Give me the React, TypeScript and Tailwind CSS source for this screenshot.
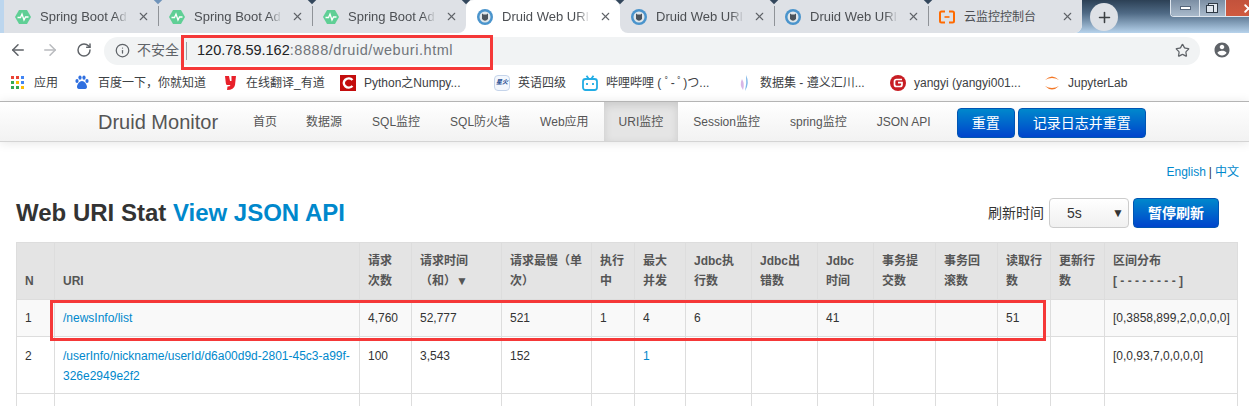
import React from 'react';
import { ArrowLeft, ArrowRight, RotateCw, Info, Star, X, Plus } from 'lucide-react';

const SpringIcon = () => (
  <svg width="16" height="16" viewBox="0 0 16 16" className="shrink-0">
    <polygon points="4,1 12,1 16,8 12,15 4,15 0,8" fill="#5fcf95" />
    <polyline points="2.5,8.5 5.5,8.5 7,5 9,11 10.5,8 13.5,8" fill="none" stroke="#fff" strokeWidth="1.3" />
  </svg>
);

const DruidIcon = () => (
  <svg width="16" height="16" viewBox="0 0 16 16" className="shrink-0">
    <circle cx="8" cy="8" r="8" fill="#4a94cc" />
    <circle cx="8" cy="8" r="5.5" fill="#dfe6ea" />
    <path d="M5 4.5 L6.5 5.5 H9.5 L11 4.5 V10 Q8 13.5 5 10 Z" fill="#4b545c" />
  </svg>
);

const CloudIcon = () => (
  <svg width="16" height="16" viewBox="0 0 16 16" className="shrink-0">
    <path d="M6 2.5 H2.5 Q1 2.5 1 4 V12 Q1 13.5 2.5 13.5 H6 M10 2.5 H13.5 Q15 2.5 15 4 V12 Q15 13.5 13.5 13.5 H10" fill="none" stroke="#ff6a00" strokeWidth="2" />
    <rect x="5.5" y="7.2" width="5" height="1.6" fill="#ff6a00" />
  </svg>
);

const tabs = [
  { title: 'Spring Boot Ad', icon: <SpringIcon /> },
  { title: 'Spring Boot Ad', icon: <SpringIcon /> },
  { title: 'Spring Boot Ad', icon: <SpringIcon />, corner: 'rounded-br-lg' },
  { title: 'Druid Web URI', icon: <DruidIcon />, active: true },
  { title: 'Druid Web URI', icon: <DruidIcon />, corner: 'rounded-bl-lg' },
  { title: 'Druid Web URI', icon: <DruidIcon /> },
  { title: '云监控控制台', icon: <CloudIcon />, corner: 'rounded-br-lg', small: true },
];

const chromeControl = 'flex items-center justify-center border-r border-[#dfe6ee] bg-[linear-gradient(to_bottom,#7b8ea3,#a9bacb)]';

const TabBar = () => (
  <div className="flex h-[33px] bg-[linear-gradient(to_bottom,#2c4055,#4f6a85_40%,#b7d3ec)]">
    <div className="w-[4px] bg-[#bcd6ee]" />
    <div className="flex w-[1078px] rounded-br-lg bg-[linear-gradient(to_bottom,#dee1e6_50%,#ffffff_50%)]">
      {tabs.map((t, i) => (
        <div
          key={i}
          className={
            'relative flex w-[154px] items-center pl-[11px] ' +
            (t.active ? 'rounded-t-lg bg-white ' : 'bg-[#dee1e6] ') +
            (t.corner || '')
          }
        >
          {i > 0 && !t.active && !tabs[i - 1].active && (
            <div className="absolute left-0 top-[6px] h-[20px] w-px bg-[#8f9398]" />
          )}
          {i > 0 && (
            <div
              className={
                'absolute left-[-3px] top-[-3px] z-10 h-[6px] w-[6px] rotate-45 ' +
                (i === 1 ? 'bg-[#6f93ba]' : 'bg-[#33475c]')
              }
            />
          )}
          {t.icon}
          <span
            className={
              'ml-[9px] w-[88px] overflow-hidden whitespace-nowrap text-[#4c4f53] ' +
              (t.small ? 'text-[12px]' : 'text-[13px] [mask-image:linear-gradient(to_right,black_85%,transparent)]')
            }
          >
            {t.title}
          </span>
          <X size={13} strokeWidth={2} className="ml-[9px] text-[#5f6368]" />
        </div>
      ))}
    </div>
    <div className="flex flex-1 items-start justify-between">
      <div className="ml-[8px] mt-[3px] flex h-[28px] w-[28px] items-center justify-center rounded-full bg-[#dee1e6]">
        <Plus size={17} strokeWidth={2.2} className="text-[#3c4043]" />
      </div>
      <div className="flex h-[17px] w-[79px] overflow-hidden rounded-bl border-b border-l border-[#dfe6ee]">
        <div className={chromeControl + ' w-[29px]'}>
          <div className="h-[4px] w-[11px] border border-[#55657a] bg-white" />
        </div>
        <div className={chromeControl + ' w-[26px]'}>
          <div className="relative h-[10px] w-[10px] border border-[#2f3a46] bg-[#dfe6ee]">
            <div className="absolute left-[-3px] top-[1px] h-[8px] w-[8px] border border-[#2f3a46] bg-[#dfe6ee]" />
          </div>
        </div>
        <div className="flex flex-1 items-center justify-end bg-[linear-gradient(to_bottom,#c3523c,#d05a3f)]">
          <X size={13} strokeWidth={3.5} className="mr-[-6px] text-white" />
        </div>
      </div>
    </div>
  </div>
);

const Toolbar = () => (
  <div className="relative flex h-[33px] items-center bg-white">
    <ArrowLeft size={18} strokeWidth={2} className="ml-[9px] text-[#5f6368]" />
    <ArrowRight size={18} strokeWidth={2} className="ml-[14px] text-[#b9bbbe]" />
    <RotateCw size={16} strokeWidth={2.2} className="ml-[17px] text-[#5f6368]" />
    <div className="ml-[12px] mt-[2px] flex h-[28px] w-[1096px] items-center rounded-full bg-[#f1f3f4]">
      <Info size={15} strokeWidth={2} className="ml-[11px] text-[#5f6368]" />
      <span className="ml-[7px] text-[14px] text-[#5f6368]">不安全</span>
      <div className="ml-[7px] h-[18px] w-px bg-[#9aa0a6]" />
      <span className="ml-[10px] text-[14.5px] text-[#202124]">
        120.78.59.162<span className="tracking-[0.55px] text-[#70757a]">:8888/druid/weburi.html</span>
      </span>
      <Star size={15} strokeWidth={2} className="ml-auto mr-[10px] text-[#5f6368]" />
    </div>
    <svg width="18" height="18" viewBox="0 0 24 24" className="ml-[13px]" fill="#5f6368">
      <path d="M12 2C6.48 2 2 6.48 2 12s4.48 10 10 10 10-4.48 10-10S17.52 2 12 2zm0 3c1.66 0 3 1.34 3 3s-1.34 3-3 3-3-1.34-3-3 1.34-3 3-3zm0 14.2c-2.5 0-4.71-1.28-6-3.22.03-1.99 4-3.08 6-3.08 1.99 0 5.97 1.09 6 3.08-1.29 1.94-3.5 3.22-6 3.22z" />
    </svg>
    {/* 截图上的红框标注 */}
    <div className="absolute left-[181px] top-[2px] h-[35px] w-[312px] border-[3px] border-[#f53838]" />
  </div>
);

const AppsIcon = () => {
  const colors = ['#ea4335', '#ea4335', '#4285f4', '#34a853', '#fbbc05', '#4285f4', '#34a853', '#34a853', '#fbbc05'];
  return (
    <div className="grid h-[13px] w-[13px] shrink-0 grid-cols-3 gap-[2px]">
      {colors.map((c, i) => (
        <div key={i} className="h-[3px] w-[3px]" style={{ background: c }} />
      ))}
    </div>
  );
};

const BaiduIcon = () => (
  <svg width="14" height="15" viewBox="0 0 14 15" className="shrink-0" fill="#2f6fe0">
    <ellipse cx="2" cy="6" rx="1.6" ry="2.1" />
    <ellipse cx="5" cy="2.6" rx="1.6" ry="2.2" />
    <ellipse cx="9" cy="2.6" rx="1.6" ry="2.2" />
    <ellipse cx="12" cy="6" rx="1.6" ry="2.1" />
    <path d="M7 6 C4.5 6 2 9.5 2 12 C2 14.5 5 14 7 14 C9 14 12 14.5 12 12 C12 9.5 9.5 6 7 6 Z" />
  </svg>
);

const YoudaoIcon = () => (
  <svg width="11" height="14" viewBox="0 0 11 14" className="shrink-0" fill="#e8202a">
    <path d="M0 0 H4 L5 5 H6.5 V0 H11 L10 9 Q9 14 2 14 L2.5 10.5 Q5 10.5 5.5 9 H2 Q1 9 0.8 7 Z" />
  </svg>
);

const CsdnIcon = () => (
  <div className="flex h-[16px] w-[16px] shrink-0 items-center justify-center bg-[#c30d0d]">
    <svg width="12" height="12" viewBox="0 0 12 12">
      <path d="M10.5 3 A5 4.5 0 1 0 10.5 9" fill="none" stroke="#fff" strokeWidth="2.4" />
    </svg>
  </div>
);

const SparkIcon = () => (
  <div className="flex h-[16px] w-[16px] shrink-0 items-center justify-center rounded-sm border border-[#c5d4ea] bg-[#f3f7fd] text-[6px] font-bold italic text-[#2a4f94]">
    星火
  </div>
);

const BiliIcon = () => (
  <svg width="16" height="16" viewBox="0 0 16 16" className="shrink-0" fill="none" stroke="#23ade5" strokeWidth="1.8">
    <rect x="1" y="4" width="14" height="11" rx="2.5" />
    <path d="M4.5 0.8 L6.5 3.5 M11.5 0.8 L9.5 3.5" />
    <path d="M5 8 V10 M11 8 V10" />
  </svg>
);

const DataIcon = () => (
  <svg width="12" height="16" viewBox="0 0 12 16" className="shrink-0">
    <path d="M8 0 Q12 8 7 16 Q9 8 8 0 Z" fill="#7fb6e8" />
    <path d="M4 4 Q7 9 5 15 Q1 10 4 4 Z" fill="#d8b6e6" />
  </svg>
);

const GiteeIcon = () => (
  <svg width="16" height="16" viewBox="0 0 16 16" className="shrink-0">
    <circle cx="8" cy="8" r="8" fill="#c71d23" />
    <path d="M12 4.5 H6.5 Q4.5 4.5 4.5 6.5 V9.5 Q4.5 11.5 6.5 11.5 H10 Q12 11.5 12 9.5 V7.7 H8" fill="none" stroke="#fff" strokeWidth="1.7" />
  </svg>
);

const JupyterIcon = () => (
  <svg width="16" height="16" viewBox="0 0 16 16" className="shrink-0" fill="#f37726">
    <path d="M1 5 Q8 -2 15 5 Q8 1 1 5 Z" />
    <path d="M1 11 Q8 18 15 11 Q8 15 1 11 Z" />
  </svg>
);

const bookmarks = [
  { icon: <AppsIcon />, label: '应用', w: 'w-[64px]', gap: 'gap-[10px]' },
  { icon: <BaiduIcon />, label: '百度一下，你就知道', w: 'w-[150px]', gap: 'gap-[9px]' },
  { icon: <YoudaoIcon />, label: '在线翻译_有道', w: 'w-[115px]', gap: 'gap-[10px]' },
  { icon: <CsdnIcon />, label: 'Python之Numpy...', w: 'w-[154px]', gap: 'gap-[8px]' },
  { icon: <SparkIcon />, label: '英语四级', w: 'w-[88px]', gap: 'gap-[8px]' },
  { icon: <BiliIcon />, label: '哔哩哔哩 ( ﾟ- ﾟ)つ...', w: 'w-[156px]', gap: 'gap-[8px]' },
  { icon: <DataIcon />, label: '数据集 - 遵义汇川...', w: 'w-[152px]', gap: 'gap-[10px]' },
  { icon: <GiteeIcon />, label: 'yangyi (yangyi001...', w: 'w-[154px]', gap: 'gap-[8px]' },
  { icon: <JupyterIcon />, label: 'JupyterLab', w: 'w-[100px]', gap: 'gap-[8px]' },
];

const Bookmarks = () => (
  <div className="flex h-[35px] items-center bg-white pb-[2px] pl-[11px]">
    {bookmarks.map((b) => (
      <div key={b.label} className={'flex items-center ' + b.w + ' ' + b.gap}>
        {b.icon}
        <span className="whitespace-nowrap text-[12px] text-[#3c4043]">{b.label}</span>
      </div>
    ))}
  </div>
);

const navItems = ['首页', '数据源', 'SQL监控', 'SQL防火墙', 'Web应用', 'URI监控', 'Session监控', 'spring监控', 'JSON API'];

const PrimaryButton = ({ children, className }: { children: React.ReactNode; className?: string }) => (
  <button
    className={
      'flex h-[30px] items-center justify-center rounded border border-[#0055b3] bg-[linear-gradient(to_bottom,#0088cc,#0044cc)] text-[14px] text-white ' +
      (className || '')
    }
  >
    {children}
  </button>
);

const NavBar = () => (
  <div className="relative z-10 flex h-[41px] items-center border-y border-t-[#b4b4b4] border-b-[#d4d4d4] bg-[linear-gradient(to_bottom,#ffffff,#f2f2f2)] pl-[98px] shadow-[0_1px_10px_rgba(0,0,0,0.1)]">
    <span className="mr-[20px] text-[20px] text-[#555]">Druid Monitor</span>
    {navItems.map((n) => (
      <a
        key={n}
        className={
          'flex h-full items-center pl-[15px] text-[12px] text-[#555] ' +
          (n === '首页' ? 'pr-[14px] ' : 'pr-[15px] ') +
          (n === 'URI监控' ? 'bg-[#e5e5e5] shadow-[inset_0_3px_8px_rgba(0,0,0,0.125)]' : '')
        }
      >
        {n}
      </a>
    ))}
    <PrimaryButton className="ml-[11px] mt-[3px] w-[58px]">重置</PrimaryButton>
    <PrimaryButton className="ml-[3px] mt-[3px] w-[128px]">记录日志并重置</PrimaryButton>
  </div>
);

const cols = ['w-[38px]', 'w-[305px]', 'w-[52px]', 'w-[90px]', 'w-[90px]', 'w-[43px]', 'w-[51px]', 'w-[66px]', 'w-[66px]', 'w-[56px]', 'w-[62px]', 'w-[62px]', 'w-[53px]', 'w-[54px]', 'w-[133px]'];

const headers: React.ReactNode[] = [
  'N',
  'URI',
  '请求次数',
  '请求时间（和）▼',
  '请求最慢（单次）',
  '执行中',
  '最大并发',
  <>Jdbc执<br />行数</>,
  <>Jdbc出<br />错数</>,
  'Jdbc时间',
  '事务提交数',
  '事务回滚数',
  '读取行数',
  '更新行数',
  <>区间分布<br />[ - - - - - - - - ]</>,
];

const thClass = 'border border-[#dddddd] p-[8px] text-left align-bottom text-[12px] font-bold leading-[20px] text-[#555] [text-spacing-trim:space-all]';
const tdClass = 'border border-[#dddddd] px-[8px] py-[8px] align-top text-[12px] leading-[20px] text-[#333]';
const td2Class = 'border border-[#dddddd] px-[8px] pb-[7px] pt-[9px] align-top text-[12px] leading-[20px] text-[#333]';
const linkClass = 'text-[#0088cc]';

const row1 = ['4,760', '52,777', '521', '1', '4', '6', '', '41', '', '', '51', '', '[0,3858,899,2,0,0,0,0]'];
const row2: React.ReactNode[] = ['100', '3,543', '152', '', <span className={linkClass}>1</span>, '', '', '', '', '', '', '', '[0,0,93,7,0,0,0,0]'];

const StatTable = () => (
  <table className="ml-[16px] mt-[14px] w-[1221px] table-fixed border-collapse">
    <colgroup>
      {cols.map((c, i) => (
        <col key={i} className={c} />
      ))}
    </colgroup>
    <thead>
      <tr className="h-[57px] bg-[#e4e4e4]">
        {headers.map((h, i) => (
          <th key={i} className={thClass}>
            {h}
          </th>
        ))}
      </tr>
    </thead>
    <tbody>
      <tr className="h-[37px] bg-[#f9f9f9]">
        <td className={tdClass}>1</td>
        <td className={tdClass}>
          <a className={linkClass}>/newsInfo/list</a>
        </td>
        {row1.map((v, i) => (
          <td key={i} className={tdClass}>
            {v}
          </td>
        ))}
      </tr>
      <tr className="h-[56px] bg-white">
        <td className={td2Class}>2</td>
        <td className={td2Class}>
          <a className={linkClass + ' break-all'}>/userInfo/nickname/userId/d6a00d9d-2801-45c3-a99f-326e2949e2f2</a>
        </td>
        {row2.map((v, i) => (
          <td key={i} className={td2Class}>
            {v}
          </td>
        ))}
      </tr>
      <tr className="h-[40px] bg-white">
        {cols.map((c, i) => (
          <td key={i} className={tdClass} />
        ))}
      </tr>
    </tbody>
  </table>
);

const App: React.FC = () => {
  return (
    <div className="relative h-[406px] w-[1249px] overflow-hidden bg-white font-['Liberation_Sans','Noto_Sans_CJK_SC',sans-serif]">
      <TabBar />
      <Toolbar />
      <Bookmarks />
      <NavBar />
      <div className="flex justify-end pr-[10px] pt-[21px] text-[12px] leading-[18px] text-[#0088cc]">
        English <span className="mx-[3px] text-[#333]">|</span> 中文
      </div>
      <div className="mt-[17px] flex h-[30px] items-center pl-[16px] pr-[30px]">
        <h3 className="text-[24px] font-bold text-[#333]">
          Web URI Stat <a className="text-[#0088cc]">View JSON API</a>
        </h3>
        <span className="ml-auto text-[14px] text-[#333]">刷新时间</span>
        <div className="ml-[5px] flex h-[30px] w-[80px] items-center justify-between rounded border border-[#cccccc] bg-[linear-gradient(to_bottom,#ffffff,#f0f0f0)] pl-[17px] pr-[4px] text-[14px] text-[#333]">
          5s
          <span className="text-[12px]">▼</span>
        </div>
        <PrimaryButton className="ml-[4px] w-[86px] font-bold">暂停刷新</PrimaryButton>
      </div>
      <StatTable />
      {/* 第一行的红框标注 */}
      <div className="absolute left-[50px] top-[300px] h-[41px] w-[996px] border-[3px] border-[#f53838]" />
    </div>
  );
};

export default App;
